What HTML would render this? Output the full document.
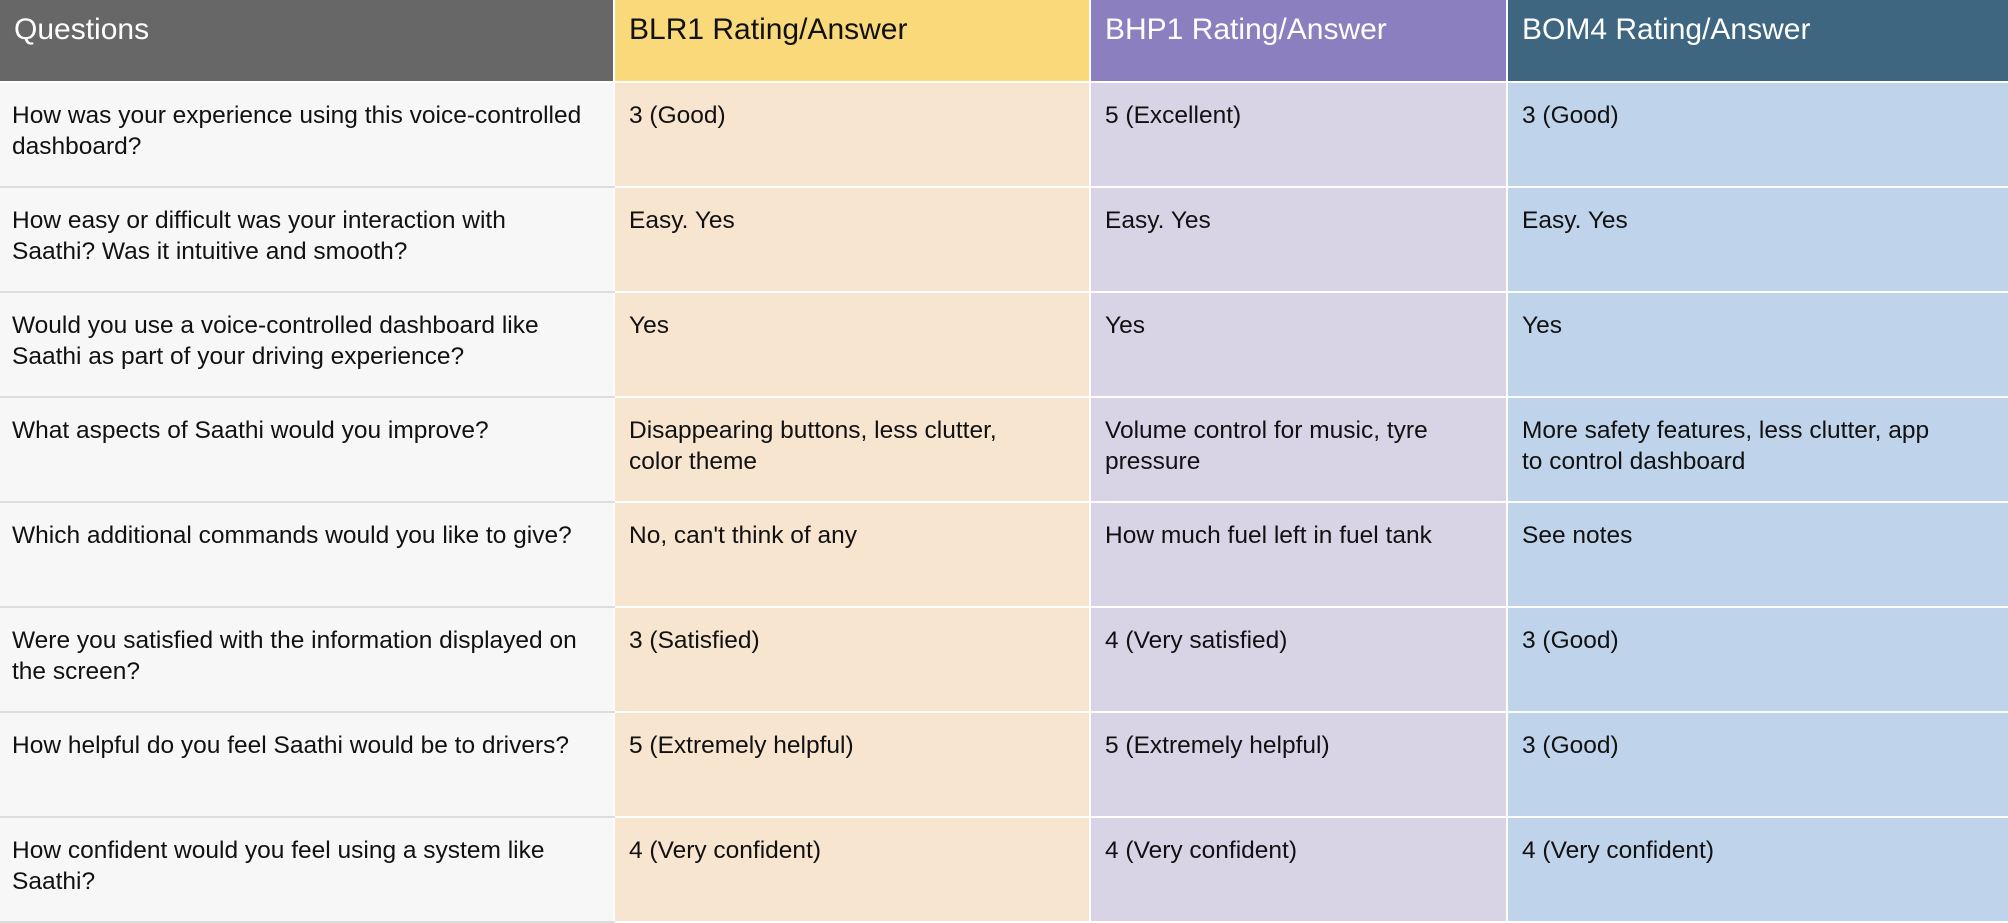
<!DOCTYPE html>
<html><head><style>
*{margin:0;padding:0;box-sizing:border-box}
body{width:2008px;height:922px;background:#fff;font-family:"Liberation Sans",sans-serif;overflow:hidden}
table{border-collapse:collapse;table-layout:fixed;width:2008px}
td,th{vertical-align:top;text-align:left;font-weight:normal;padding:17px 14px 0 14px;font-size:24.5px;line-height:31px;color:#111;border:2px solid #fff;height:105px;white-space:nowrap;overflow:hidden}
th{height:82px;font-size:30px;padding-top:14px;color:#fff}
th.q{background:#676767}
th.y{background:#f9d97a;color:#111}
th.p{background:#8b7fbf}
th.t{background:#3e6680}
td.q{background:#f7f7f7;padding-left:12px;border-bottom:2px solid #ddd;border-top:2px solid #ddd}
td.y{background:#f8e5d0}
td.p{background:#d9d3e6}
td.t{background:#bfd4eb}
tr>*:first-child{border-left:0}
tr>*:last-child{border-right:0}
tr:first-child>*{border-top:0}
</style></head><body>
<table>
<colgroup><col style="width:614px"><col style="width:476px"><col style="width:417px"><col style="width:501px"></colgroup>
<tr><th class="q">Questions</th><th class="y">BLR1 Rating/Answer</th><th class="p">BHP1 Rating/Answer</th><th class="t">BOM4 Rating/Answer</th></tr>
<tr><td class="q">How was your experience using this voice-controlled<br>dashboard?</td><td class="y">3 (Good)</td><td class="p">5 (Excellent)</td><td class="t">3 (Good)</td></tr>
<tr><td class="q">How easy or difficult was your interaction with<br>Saathi? Was it intuitive and smooth?</td><td class="y">Easy. Yes</td><td class="p">Easy. Yes</td><td class="t">Easy. Yes</td></tr>
<tr><td class="q">Would you use a voice-controlled dashboard like<br>Saathi as part of your driving experience?</td><td class="y">Yes</td><td class="p">Yes</td><td class="t">Yes</td></tr>
<tr><td class="q">What aspects of Saathi would you improve?</td><td class="y">Disappearing buttons, less clutter,<br>color theme</td><td class="p">Volume control for music, tyre<br>pressure</td><td class="t">More safety features, less clutter, app<br>to control dashboard</td></tr>
<tr><td class="q">Which additional commands would you like to give?</td><td class="y">No, can't think of any</td><td class="p">How much fuel left in fuel tank</td><td class="t">See notes</td></tr>
<tr><td class="q">Were you satisfied with the information displayed on<br>the screen?</td><td class="y">3 (Satisfied)</td><td class="p">4 (Very satisfied)</td><td class="t">3 (Good)</td></tr>
<tr><td class="q">How helpful do you feel Saathi would be to drivers?</td><td class="y">5 (Extremely helpful)</td><td class="p">5 (Extremely helpful)</td><td class="t">3 (Good)</td></tr>
<tr><td class="q">How confident would you feel using a system like<br>Saathi?</td><td class="y">4 (Very confident)</td><td class="p">4 (Very confident)</td><td class="t">4 (Very confident)</td></tr>
</table>
</body></html>
